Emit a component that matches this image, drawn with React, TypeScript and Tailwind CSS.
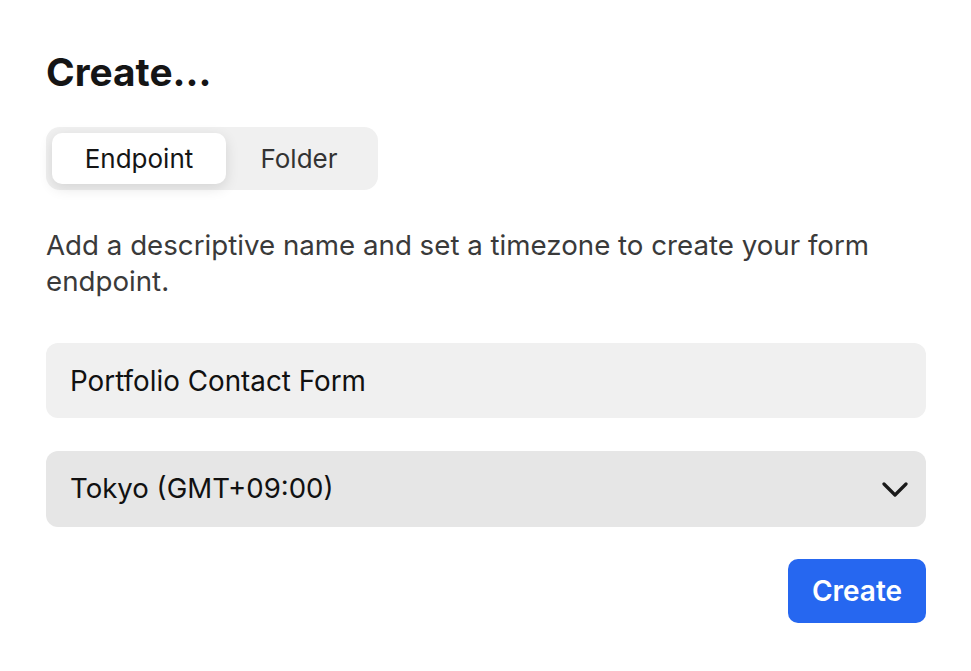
import React, { useState } from 'react';

export default function App() {
  const [tab, setTab] = useState<'endpoint' | 'folder'>('endpoint');
  const [name, setName] = useState('Portfolio Contact Form');
  const [zone, setZone] = useState('Tokyo (GMT+09:00)');

  const zones = ['Tokyo (GMT+09:00)', 'London (GMT+00:00)', 'New York (GMT-05:00)'];

  return (
    <div className="min-h-screen bg-white font-['Inter','Liberation_Sans',sans-serif] text-[#151515]">
      <div className="w-[880px] ml-[46px] pt-[49px]">
        {/* Heading */}
        <h1 className="text-[38.8px] leading-[46px] font-bold">Create...</h1>

        {/* Tabs */}
        <div className="mt-[32px] inline-flex h-[63px] p-[6px] rounded-[14px] bg-[#f0f0f0]">
          <button
            onClick={() => setTab('endpoint')}
            className={`w-[174px] rounded-[10px] text-[26px] ${
              tab === 'endpoint' ? 'bg-white text-[#151515] shadow-[0_4px_14px_rgba(0,0,0,0.12)]' : 'text-[#333]'
            }`}
          >
            Endpoint
          </button>
          <button
            onClick={() => setTab('folder')}
            className={`w-[146px] rounded-[10px] text-[26px] ${
              tab === 'folder' ? 'bg-white text-[#151515] shadow-[0_4px_14px_rgba(0,0,0,0.12)]' : 'text-[#333]'
            }`}
          >
            Folder
          </button>
        </div>

        {/* Description */}
        <p className="mt-[37px] text-[27.7px] leading-[36px] text-[#3a3a3a]">
          Add a descriptive name and set a timezone to create your form endpoint.
        </p>

        {/* Name input */}
        <input
          value={name}
          onChange={(e) => setName(e.target.value)}
          className="mt-[44px] block w-full h-[75px] px-[24px] rounded-[12px] bg-[#f0f0f0] text-[27.8px] text-[#111] outline-none"
        />

        {/* Timezone select */}
        <div className="relative mt-[33px]">
          <select
            value={zone}
            onChange={(e) => setZone(e.target.value)}
            className="block w-full h-[76px] px-[24px] rounded-[12px] bg-[#e6e6e6] text-[27.6px] text-[#111] appearance-none outline-none"
          >
            {zones.map((z) => (
              <option key={z}>{z}</option>
            ))}
          </select>
          <svg
            className="pointer-events-none absolute right-[18px] top-[31px]"
            width="26"
            height="15"
            viewBox="0 0 26 15"
            fill="none"
            stroke="#1a1a1a"
            strokeWidth="3.2"
            strokeLinecap="round"
            strokeLinejoin="round"
          >
            <path d="M2 2l11 11L24 2" />
          </svg>
        </div>

        {/* Submit */}
        <div className="mt-[32px] flex justify-end">
          <button className="h-[64px] w-[138px] rounded-[10px] bg-[#2667f0] text-white text-[28px] font-semibold">
            Create
          </button>
        </div>
      </div>
    </div>
  );
}
